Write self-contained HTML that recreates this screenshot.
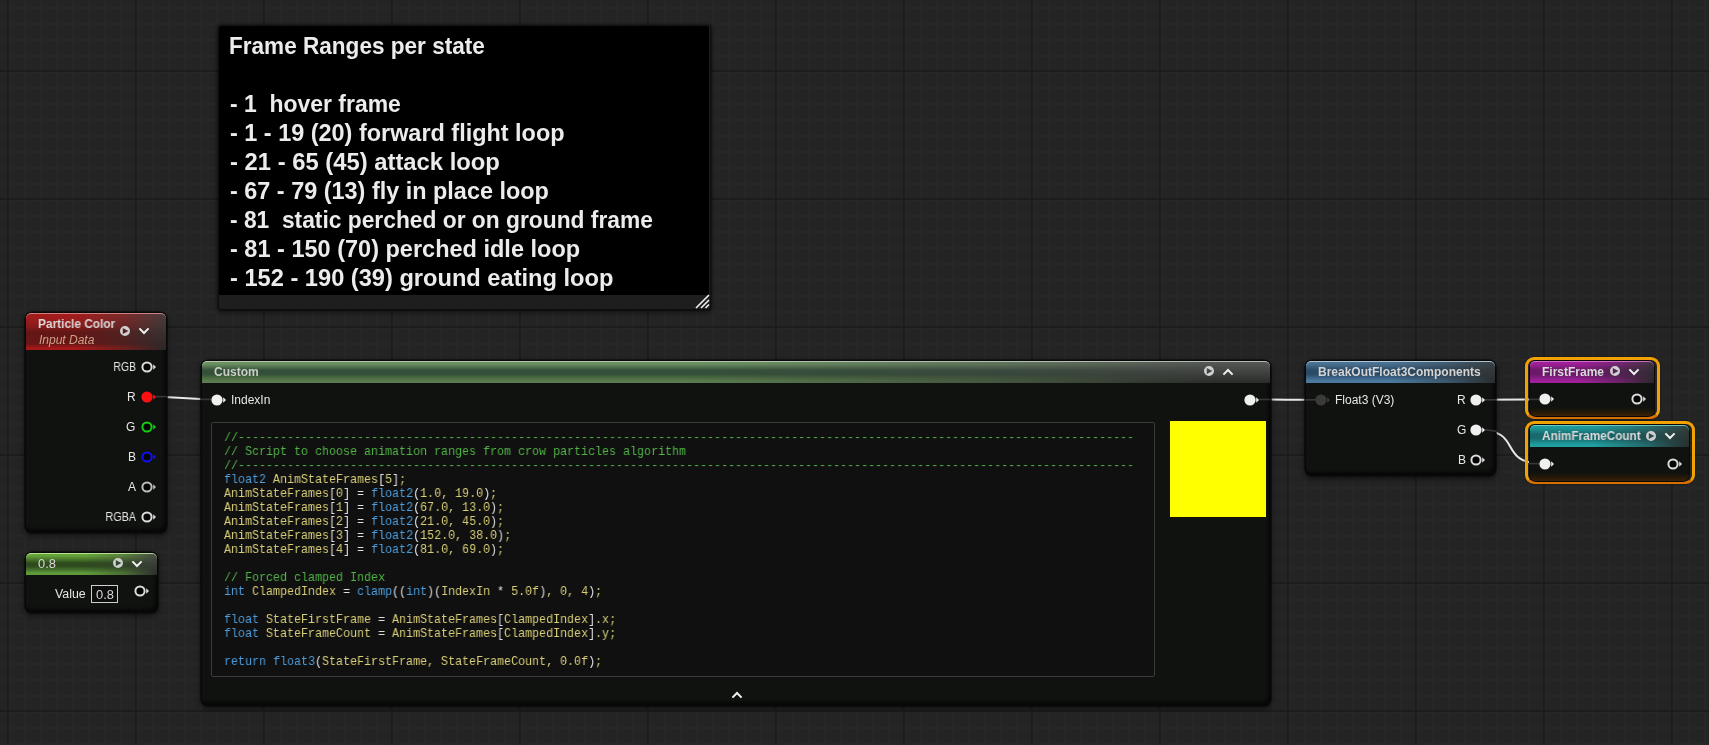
<!DOCTYPE html>
<html><head><meta charset="utf-8"><style>
*{margin:0;padding:0;box-sizing:border-box}
html,body{width:1709px;height:745px;overflow:hidden}
body{position:relative;font-family:"Liberation Sans",sans-serif;color:#e0e0e0;
background:
 linear-gradient(to right,#1c1c1c 2px,transparent 2px) 7px 0/128px 128px,
 linear-gradient(to bottom,#1c1c1c 2px,transparent 2px) 0 70px/128px 128px,
 linear-gradient(to right,#272727 2px,transparent 2px) 8px 0/16px 16px,
 linear-gradient(to bottom,#272727 2px,transparent 2px) 0 7px/16px 16px,
 #242424;}
.abs{position:absolute}
#cmt{position:absolute;left:219px;top:26px;width:491px;height:283px;background:#1e1e1e;border-radius:2px;box-shadow:0 0 3px 2px rgba(0,0,0,.5),0 3px 4px 1px rgba(0,0,0,.35)}
#cmt .blk{position:absolute;left:0;top:0;width:490px;height:269px;background:#000;border-radius:2px 2px 0 0}
#cmt .ln{position:absolute;left:11px;font-weight:bold;font-size:23.2px;line-height:23.2px;color:#ececec;white-space:pre;transform-origin:0 0}
.node{position:absolute;background:#10120f;border-radius:6px;box-shadow:0 0 0 1.6px #080808,inset -3px -4px 3px -1px rgba(0,0,0,.6),0 2px 5px 2px rgba(0,0,0,.5)}
.hdr{position:absolute;left:0;top:0;right:0;border-radius:6px 6px 0 0}
.t{position:absolute;white-space:pre;line-height:1;transform-origin:0 0;will-change:transform}
.title{font-weight:bold;font-size:12px;color:#d9d9d9}
.lbl{font-size:12px;color:#e6e6e6}
.code{position:absolute;font-family:"Liberation Mono",monospace;font-size:13px;line-height:14px;white-space:pre;color:#d8ce78;transform:scaleX(0.8974);transform-origin:0 0;will-change:transform}
.c{color:#50b446}.k{color:#4c9ddc}.p{color:#e0e0e0}
svg{position:absolute;overflow:visible}
</style></head><body>
<svg style="left:0;top:0" width="1709" height="745"><path d="M146.5 396.6 L160 396.7 L205 399.3 L216.5 399.4" stroke="#e8e8e8" stroke-width="2" fill="none"/><path d="M1250 399.5 C1290 399.5 1281 399.8 1321 399.8" stroke="#e8e8e8" stroke-width="2" fill="none"/><path d="M1476 399.8 L1544.6 399.4" stroke="#e8e8e8" stroke-width="2" fill="none"/><path d="M1476 429.7 C1526 429.7 1494.6 463.6 1544.6 463.6" stroke="#e8e8e8" stroke-width="2" fill="none"/></svg>
<div id="cmt"><div class="blk"></div>
<div class="ln" style="top:9.0px;left:10.2px;transform:scaleX(0.9731)">Frame Ranges per state</div>
<div class="ln" style="top:66.7px;left:11.0px;transform:scaleX(0.9893)">- 1  hover frame</div>
<div class="ln" style="top:95.7px;left:11.0px;transform:scaleX(1.0104)">- 1 - 19 (20) forward flight loop</div>
<div class="ln" style="top:124.7px;left:11.0px;transform:scaleX(1.0267)">- 21 - 65 (45) attack loop</div>
<div class="ln" style="top:153.6px;left:11.0px;transform:scaleX(1.0101)">- 67 - 79 (13) fly in place loop</div>
<div class="ln" style="top:182.6px;left:11.0px;transform:scaleX(0.9826)">- 81  static perched or on ground frame</div>
<div class="ln" style="top:211.5px;left:11.0px;transform:scaleX(1.0138)">- 81 - 150 (70) perched idle loop</div>
<div class="ln" style="top:240.8px;left:11.0px;transform:scaleX(1.0191)">- 152 - 190 (39) ground eating loop</div>
<svg style="left:477px;top:269px" width="1" height="1"><path d="M0 13 L13 0 M5 13 L13 5 M9.5 13 L13 9.5" stroke="#f0f0f0" stroke-width="1.6" fill="none"/></svg>
</div>
<div class="node" style="left:25.6px;top:312.8px;width:140.2px;height:219.4px"><div class="hdr" style="height:36.9px;border-radius:5px 5px 0 0;overflow:hidden;background:linear-gradient(to bottom,#4a3e3e,#2a2626)"><div style="position:absolute;left:0;top:0;right:0;bottom:0;background:linear-gradient(to bottom,#a21e1e 0,#a01c1c 13%,#8a1a1a 36%,#621616 52%,#6a1616 84%,#a01818 93%,#a81a1a 100%);-webkit-mask-image:linear-gradient(to right,#000 0%,#000 35%,rgba(0,0,0,.55) 70%,transparent 100%);mask-image:linear-gradient(to right,#000 0%,#000 35%,rgba(0,0,0,.55) 70%,transparent 100%)"></div><div style="position:absolute;left:0;top:0;right:0;bottom:0;border-radius:5px 5px 0 0;box-shadow:inset 0 1px 0 rgba(230,150,150,.8)"></div></div></div>
<div class="t title" style="left:38.30px;top:317.74px;font-size:12.00px;transform:scaleX(0.99)">Particle Color</div>
<div class="t lbl" style="left:38.60px;top:333.84px;font-size:12.00px;font-style:italic;color:#cda28a">Input Data</div>
<svg style="left:125.00px;top:330.90px" width="1" height="1"><path d="M-5.00 0 A5.00 5.00 0 1 0 5.00 0 A5.00 5.00 0 1 0 -5.00 0Z M-2.2 -3.0 L3.4 0 L-2.2 3.0Z" fill="#d0d0d0" fill-rule="evenodd"/></svg>
<svg style="left:144.10px;top:331.00px" width="1" height="1"><path d="M-4.6 -2.6 L0 2 L4.6 -2.6" fill="none" stroke="#f0f0f0" stroke-width="2"/></svg>
<div class="t lbl" style="right:1573.40px;top:360.64px;font-size:12px;transform-origin:100% 0;transform:scaleX(0.870)">RGB</div>
<svg style="left:146.50px;top:366.50px" width="1" height="1"><circle cx="0" cy="0" r="4.6" fill="#050505" stroke="#dcdcdc" stroke-width="2"/><path d="M6.2 -2.7 L9 0 L6.2 2.7Z" fill="#dcdcdc"/></svg>
<div class="t lbl" style="right:1573.40px;top:390.74px;font-size:12px;transform-origin:100% 0;transform:scaleX(1.000)">R</div>
<svg style="left:146.50px;top:396.60px" width="1" height="1"><circle cx="0" cy="0" r="5.6" fill="#ff1010"/><path d="M6.2 -2.7 L9 0 L6.2 2.7Z" fill="#ff1010"/></svg>
<div class="t lbl" style="right:1573.40px;top:420.64px;font-size:12px;transform-origin:100% 0;transform:scaleX(1.000)">G</div>
<svg style="left:146.50px;top:426.50px" width="1" height="1"><circle cx="0" cy="0" r="4.6" fill="#050505" stroke="#10d010" stroke-width="2"/><path d="M6.2 -2.7 L9 0 L6.2 2.7Z" fill="#10d010"/></svg>
<div class="t lbl" style="right:1573.40px;top:450.64px;font-size:12px;transform-origin:100% 0;transform:scaleX(1.000)">B</div>
<svg style="left:146.50px;top:456.50px" width="1" height="1"><circle cx="0" cy="0" r="4.6" fill="#050505" stroke="#1010ee" stroke-width="2"/><path d="M6.2 -2.7 L9 0 L6.2 2.7Z" fill="#1010ee"/></svg>
<div class="t lbl" style="right:1573.40px;top:480.64px;font-size:12px;transform-origin:100% 0;transform:scaleX(1.000)">A</div>
<svg style="left:146.50px;top:486.50px" width="1" height="1"><circle cx="0" cy="0" r="4.6" fill="#050505" stroke="#bdbdbd" stroke-width="2"/><path d="M6.2 -2.7 L9 0 L6.2 2.7Z" fill="#bdbdbd"/></svg>
<div class="t lbl" style="right:1573.40px;top:510.64px;font-size:12px;transform-origin:100% 0;transform:scaleX(0.900)">RGBA</div>
<svg style="left:146.50px;top:516.50px" width="1" height="1"><circle cx="0" cy="0" r="4.6" fill="#050505" stroke="#dcdcdc" stroke-width="2"/><path d="M6.2 -2.7 L9 0 L6.2 2.7Z" fill="#dcdcdc"/></svg>
<div class="node" style="left:26.2px;top:553.2px;width:131px;height:59px"><div class="hdr" style="height:21.6px;border-radius:5px 5px 0 0;overflow:hidden;background:linear-gradient(to bottom,#4a4e48,#2a2c2a)"><div style="position:absolute;left:0;top:0;right:0;bottom:0;background:linear-gradient(to bottom,#6aaa3a 0,#64a038 14%,#2e4c1e 45%,#2e4a1e 60%,#4a7a2e 80%,#5e9a3a 90%,#5e9a3a 100%);-webkit-mask-image:linear-gradient(to right,#000 0%,#000 45%,rgba(0,0,0,.6) 75%,transparent 100%);mask-image:linear-gradient(to right,#000 0%,#000 45%,rgba(0,0,0,.6) 75%,transparent 100%)"></div><div style="position:absolute;left:0;top:0;right:0;bottom:0;border-radius:5px 5px 0 0;box-shadow:inset 0 1px 0 rgba(200,240,170,.8)"></div></div></div>
<div class="t lbl" style="left:38.00px;top:557.74px;font-size:12.00px;color:#d8d8d8;transform:scaleX(1.07)">0.8</div>
<svg style="left:117.70px;top:563.40px" width="1" height="1"><path d="M-5.00 0 A5.00 5.00 0 1 0 5.00 0 A5.00 5.00 0 1 0 -5.00 0Z M-2.2 -3.0 L3.4 0 L-2.2 3.0Z" fill="#d0d0d0" fill-rule="evenodd"/></svg>
<svg style="left:137.10px;top:563.60px" width="1" height="1"><path d="M-4.6 -2.6 L0 2 L4.6 -2.6" fill="none" stroke="#f0f0f0" stroke-width="2"/></svg>
<div class="t lbl" style="left:54.60px;top:587.84px;font-size:12.00px;transform:scaleX(1.03)">Value</div>
<div class="abs" style="left:91px;top:585px;width:27.4px;height:18.4px;border:1px solid #cfcfcf;background:#0c0d0c"></div><div class="t lbl" style="left:95.80px;top:589.04px;font-size:12.00px;color:#d8d8d8;transform:scaleX(1.07)">0.8</div>
<svg style="left:140.00px;top:591.40px" width="1" height="1"><circle cx="0" cy="0" r="4.6" fill="#050505" stroke="#dcdcdc" stroke-width="2"/><path d="M6.2 -2.7 L9 0 L6.2 2.7Z" fill="#dcdcdc"/></svg>
<div class="node" style="left:201.6px;top:361.2px;width:1068px;height:343.5px"><div class="hdr" style="height:21.6px;border-radius:5px 5px 0 0;overflow:hidden;background:linear-gradient(to bottom,#585a58,#2a2c2a)"><div style="position:absolute;left:0;top:0;right:0;bottom:0;background:linear-gradient(to bottom,#6a9462 0,#6a9060 14%,#34503a 42%,#34503a 60%,#4a6a40 76%,#5a7c50 90%,#5a7c50 100%);-webkit-mask-image:linear-gradient(to right,#000 0%,#000 45%,rgba(0,0,0,.5) 75%,transparent 95%);mask-image:linear-gradient(to right,#000 0%,#000 45%,rgba(0,0,0,.5) 75%,transparent 95%)"></div><div style="position:absolute;left:0;top:0;right:0;bottom:0;border-radius:5px 5px 0 0;box-shadow:inset 0 1px 0 rgba(195,205,195,.85)"></div></div><div class="abs" style="left:9.4px;top:61.2px;width:944px;height:255px;background:#101010;border:1px solid #3a3a3a;border-radius:2px"></div><div class="abs" style="left:968.4px;top:59.8px;width:96px;height:96px;background:#ffff00"></div></div>
<div class="t title" style="left:214.40px;top:365.64px;font-size:12.00px;color:#c9cfc6">Custom</div>
<svg style="left:1209.20px;top:371.30px" width="1" height="1"><path d="M-5.00 0 A5.00 5.00 0 1 0 5.00 0 A5.00 5.00 0 1 0 -5.00 0Z M-2.2 -3.0 L3.4 0 L-2.2 3.0Z" fill="#d0d0d0" fill-rule="evenodd"/></svg>
<svg style="left:1228.00px;top:371.50px" width="1" height="1"><path d="M-4.6 2.6 L0 -2 L4.6 2.6" fill="none" stroke="#f0f0f0" stroke-width="2"/></svg>
<svg style="left:216.50px;top:399.50px" width="1" height="1"><circle cx="0" cy="0" r="5.6" fill="#f0f0f0"/><path d="M6.2 -2.7 L9 0 L6.2 2.7Z" fill="#f0f0f0"/></svg>
<div class="t lbl" style="left:231.40px;top:393.84px;font-size:12.00px;">IndexIn</div>
<svg style="left:1250.20px;top:399.50px" width="1" height="1"><circle cx="0" cy="0" r="5.6" fill="#f0f0f0"/><path d="M6.2 -2.7 L9 0 L6.2 2.7Z" fill="#f0f0f0"/></svg>
<svg style="left:737.00px;top:695.00px" width="1" height="1"><path d="M-4.6 2.6 L0 -2 L4.6 2.6" fill="none" stroke="#f0f0f0" stroke-width="2"/></svg>
<div class="code" style="left:224px;top:431px"><span class="c">//--------------------------------------------------------------------------------------------------------------------------------</span>
<span class="c">// Script to choose animation ranges from crow particles algorithm</span>
<span class="c">//--------------------------------------------------------------------------------------------------------------------------------</span>
<span class="k">float2</span> AnimStateFrames<span class="p">[</span>5<span class="p">]</span>;
AnimStateFrames<span class="p">[</span>0<span class="p">]</span> <span class="p">=</span> <span class="k">float2</span><span class="p">(</span>1.0, 19.0<span class="p">)</span>;
AnimStateFrames<span class="p">[</span>1<span class="p">]</span> <span class="p">=</span> <span class="k">float2</span><span class="p">(</span>67.0, 13.0<span class="p">)</span>;
AnimStateFrames<span class="p">[</span>2<span class="p">]</span> <span class="p">=</span> <span class="k">float2</span><span class="p">(</span>21.0, 45.0<span class="p">)</span>;
AnimStateFrames<span class="p">[</span>3<span class="p">]</span> <span class="p">=</span> <span class="k">float2</span><span class="p">(</span>152.0, 38.0<span class="p">)</span>;
AnimStateFrames<span class="p">[</span>4<span class="p">]</span> <span class="p">=</span> <span class="k">float2</span><span class="p">(</span>81.0, 69.0<span class="p">)</span>;

<span class="c">// Forced clamped Index</span>
<span class="k">int</span> ClampedIndex <span class="p">=</span> <span class="k">clamp</span><span class="p">((</span><span class="k">int</span><span class="p">)(</span>IndexIn <span class="p">*</span> 5.0f<span class="p">)</span>, 0, 4<span class="p">)</span>;

<span class="k">float</span> StateFirstFrame <span class="p">=</span> AnimStateFrames<span class="p">[</span>ClampedIndex<span class="p">]</span>.x;
<span class="k">float</span> StateFrameCount <span class="p">=</span> AnimStateFrames<span class="p">[</span>ClampedIndex<span class="p">]</span>.y;

<span class="k">return</span> <span class="k">float3</span><span class="p">(</span>StateFirstFrame, StateFrameCount, 0.0f<span class="p">)</span>;</div>
<div class="node" style="left:1305.9px;top:361.2px;width:189.4px;height:113.4px"><div class="hdr" style="height:21.8px;border-radius:5px 5px 0 0;overflow:hidden;background:linear-gradient(to bottom,#3a4044,#2a2c2c)"><div style="position:absolute;left:0;top:0;right:0;bottom:0;background:linear-gradient(to bottom,#4a7494 0,#4a7090 14%,#2a4a66 42%,#2a4a66 60%,#3e668a 78%,#4a7aa0 90%,#4a7aa0 100%);-webkit-mask-image:linear-gradient(to right,#000 0%,#000 45%,rgba(0,0,0,.55) 75%,transparent 100%);mask-image:linear-gradient(to right,#000 0%,#000 45%,rgba(0,0,0,.55) 75%,transparent 100%)"></div><div style="position:absolute;left:0;top:0;right:0;bottom:0;border-radius:5px 5px 0 0;box-shadow:inset 0 1px 0 rgba(190,215,230,.85)"></div></div></div>
<div class="t title" style="left:1318.30px;top:366.04px;font-size:12.00px;color:#d4d4d4">BreakOutFloat3Components</div>
<svg style="left:1321.30px;top:399.80px" width="1" height="1"><circle cx="0" cy="0" r="5.6" fill="#3a3a3a"/><path d="M6.2 -2.7 L9 0 L6.2 2.7Z" fill="#3a3a3a"/></svg>
<div class="t lbl" style="left:1335.20px;top:394.04px;font-size:12.00px;">Float3 (V3)</div>
<div class="t lbl" style="right:243.00px;top:393.94px;font-size:12px">R</div>
<div class="t lbl" style="right:243.00px;top:423.84px;font-size:12px">G</div>
<div class="t lbl" style="right:243.00px;top:453.74px;font-size:12px">B</div>
<svg style="left:1476.20px;top:399.80px" width="1" height="1"><circle cx="0" cy="0" r="5.6" fill="#f0f0f0"/><path d="M6.2 -2.7 L9 0 L6.2 2.7Z" fill="#f0f0f0"/></svg>
<svg style="left:1476.20px;top:429.70px" width="1" height="1"><circle cx="0" cy="0" r="5.6" fill="#f0f0f0"/><path d="M6.2 -2.7 L9 0 L6.2 2.7Z" fill="#f0f0f0"/></svg>
<svg style="left:1476.20px;top:459.60px" width="1" height="1"><circle cx="0" cy="0" r="4.6" fill="#050505" stroke="#dcdcdc" stroke-width="2"/><path d="M6.2 -2.7 L9 0 L6.2 2.7Z" fill="#dcdcdc"/></svg>
<div class="abs" style="left:1525.3px;top:356.6px;width:134.5px;height:62.6px;border:3.4px solid #f2a200;border-radius:9px;border-bottom-color:#d87000;border-bottom-width:3px;box-shadow:0 0 2px rgba(0,0,0,.6)"></div><div class="node" style="left:1529.9px;top:361.0px;width:124.1px;height:55.0px;box-shadow:0 0 0 1px #080808;background:linear-gradient(to bottom,#10120f 0,#10120f calc(100% - 8px),#2a1a08 calc(100% - 3px),#3a2408 100%)"><div class="hdr" style="height:22.0px;border-radius:5px 5px 0 0;overflow:hidden;background:linear-gradient(to bottom,#3e3440,#2a262a)"><div style="position:absolute;left:0;top:0;right:0;bottom:0;background:linear-gradient(to bottom,#a0209a 0,#9e1e98 14%,#6a1a68 42%,#6a1a68 60%,#8a1c86 78%,#a0209a 90%,#a0209a 100%);-webkit-mask-image:linear-gradient(to right,#000 0%,#000 40%,rgba(0,0,0,.55) 72%,transparent 100%);mask-image:linear-gradient(to right,#000 0%,#000 40%,rgba(0,0,0,.55) 72%,transparent 100%)"></div><div style="position:absolute;left:0;top:0;right:0;bottom:0;border-radius:5px 5px 0 0;box-shadow:inset 0 1px 0 rgba(220,120,210,.85)"></div></div></div>
<div class="t title" style="left:1541.80px;top:366.04px;font-size:12.00px;color:#dadada;transform:scaleX(1.000)">FirstFrame</div>
<svg style="left:1615.00px;top:371.30px" width="1" height="1"><path d="M-5.00 0 A5.00 5.00 0 1 0 5.00 0 A5.00 5.00 0 1 0 -5.00 0Z M-2.2 -3.0 L3.4 0 L-2.2 3.0Z" fill="#d0d0d0" fill-rule="evenodd"/></svg>
<svg style="left:1633.80px;top:371.50px" width="1" height="1"><path d="M-4.6 -2.6 L0 2 L4.6 -2.6" fill="none" stroke="#f0f0f0" stroke-width="2"/></svg>
<svg style="left:1544.60px;top:399.40px" width="1" height="1"><circle cx="0" cy="0" r="5.6" fill="#f0f0f0"/><path d="M6.2 -2.7 L9 0 L6.2 2.7Z" fill="#f0f0f0"/></svg>
<svg style="left:1636.60px;top:399.40px" width="1" height="1"><circle cx="0" cy="0" r="4.6" fill="#050505" stroke="#dcdcdc" stroke-width="2"/><path d="M6.2 -2.7 L9 0 L6.2 2.7Z" fill="#dcdcdc"/></svg>
<div class="abs" style="left:1525.3px;top:420.6px;width:169.9px;height:63.2px;border:3.4px solid #f2a200;border-radius:9px;border-bottom-color:#d87000;border-bottom-width:3px;box-shadow:0 0 2px rgba(0,0,0,.6)"></div><div class="node" style="left:1529.9px;top:425.0px;width:159.5px;height:55.6px;box-shadow:0 0 0 1px #080808;background:linear-gradient(to bottom,#10120f 0,#10120f calc(100% - 8px),#2a1a08 calc(100% - 3px),#3a2408 100%)"><div class="hdr" style="height:22.0px;border-radius:5px 5px 0 0;overflow:hidden;background:linear-gradient(to bottom,#34403f,#262c2c)"><div style="position:absolute;left:0;top:0;right:0;bottom:0;background:linear-gradient(to bottom,#1e9a9a 0,#1e9898 14%,#186a6e 42%,#186a6e 60%,#1c8a8c 78%,#20a0a0 90%,#20a0a0 100%);-webkit-mask-image:linear-gradient(to right,#000 0%,#000 40%,rgba(0,0,0,.55) 72%,transparent 100%);mask-image:linear-gradient(to right,#000 0%,#000 40%,rgba(0,0,0,.55) 72%,transparent 100%)"></div><div style="position:absolute;left:0;top:0;right:0;bottom:0;border-radius:5px 5px 0 0;box-shadow:inset 0 1px 0 rgba(120,215,205,.85)"></div></div></div>
<div class="t title" style="left:1542.20px;top:430.04px;font-size:12.00px;color:#dadada;transform:scaleX(0.980)">AnimFrameCount</div>
<svg style="left:1650.80px;top:435.50px" width="1" height="1"><path d="M-5.00 0 A5.00 5.00 0 1 0 5.00 0 A5.00 5.00 0 1 0 -5.00 0Z M-2.2 -3.0 L3.4 0 L-2.2 3.0Z" fill="#d0d0d0" fill-rule="evenodd"/></svg>
<svg style="left:1669.50px;top:435.70px" width="1" height="1"><path d="M-4.6 -2.6 L0 2 L4.6 -2.6" fill="none" stroke="#f0f0f0" stroke-width="2"/></svg>
<svg style="left:1544.60px;top:463.60px" width="1" height="1"><circle cx="0" cy="0" r="5.6" fill="#f0f0f0"/><path d="M6.2 -2.7 L9 0 L6.2 2.7Z" fill="#f0f0f0"/></svg>
<svg style="left:1673.30px;top:463.60px" width="1" height="1"><circle cx="0" cy="0" r="4.6" fill="#050505" stroke="#dcdcdc" stroke-width="2"/><path d="M6.2 -2.7 L9 0 L6.2 2.7Z" fill="#dcdcdc"/></svg>
<svg style="left:0;top:0" width="1709" height="745"><path d="M155.0 396.6 L166.5 396.6" stroke="#383838" stroke-width="1.6" fill="none"/><path d="M200.6 399.4 L211.0 399.4" stroke="#383838" stroke-width="1.6" fill="none"/><path d="M1259.0 399.5 L1270.2 399.5" stroke="#383838" stroke-width="1.6" fill="none"/><path d="M1305.5 399.8 L1316.0 399.8" stroke="#383838" stroke-width="1.6" fill="none"/><path d="M1485.0 399.8 L1496.0 399.8" stroke="#383838" stroke-width="1.6" fill="none"/><path d="M1485.0 429.7 L1496.5 431.2" stroke="#383838" stroke-width="1.6" fill="none"/><path d="M1528.7 399.4 L1539.0 399.4" stroke="#383838" stroke-width="1.6" fill="none"/><path d="M1528.7 463.6 L1539.0 463.6" stroke="#383838" stroke-width="1.6" fill="none"/></svg>
</body></html>
